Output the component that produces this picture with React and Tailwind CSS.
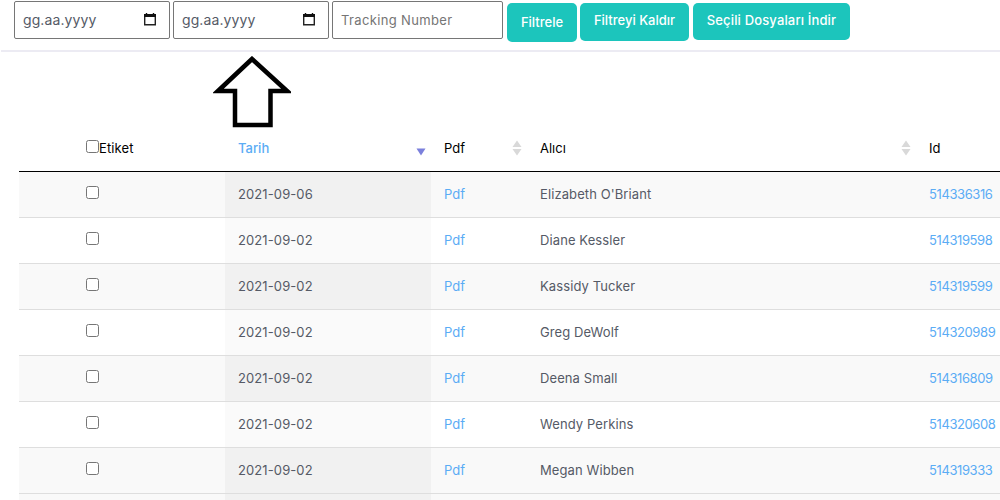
const rows = [
  ["2021-09-06", "Elizabeth O'Briant", "514336316"],
  ["2021-09-02", "Diane Kessler", "514319598"],
  ["2021-09-02", "Kassidy Tucker", "514319599"],
  ["2021-09-02", "Greg DeWolf", "514320989"],
  ["2021-09-02", "Deena Small", "514316809"],
  ["2021-09-02", "Wendy Perkins", "514320608"],
  ["2021-09-02", "Megan Wibben", "514319333"],
];

function Calendar() {
  return (
    <svg width="14" height="14" viewBox="0 0 14 14" className="mb-[3px] shrink-0">
      <path d="M1.7 2.7h10.6v10H1.7z" fill="none" stroke="#222" strokeWidth="1.4" />
      <path d="M1 2h12v3H1z" fill="#111" />
      <path d="M3.5 1v2M10.5 1v2" stroke="#111" strokeWidth="1.4" />
    </svg>
  );
}

function DateBox() {
  return (
    <div className="flex h-[38px] w-[156px] items-center justify-between rounded-[2px] border border-[#767676] bg-white pl-[8px] pr-[12px] text-[14px] text-[#555a66]">
      <span className="pb-[2px] tracking-[0.1px]">gg.aa.yyyy</span>
      <Calendar />
    </div>
  );
}

function Sort() {
  return (
    <svg width="10" height="16" viewBox="0 0 10 16" className="block">
      <path d="M5 0.5L9.5 7H0.5z" fill="#d9d9d9" />
      <path d="M5 15.5L9.5 9H0.5z" fill="#d9d9d9" />
    </svg>
  );
}

function Button({ children, className }) {
  return (
    <button className={`mt-[2px] rounded-[5px] bg-[#1cc5bc] text-[13px] font-medium text-white ${className}`}>
      {children}
    </button>
  );
}

export default function App() {
  return (
    <div className="h-[500px] w-[1000px] overflow-hidden bg-white font-['Inter',sans-serif]">
      <div className="ml-px flex h-[52px] border-b-2 border-[#ecebf3] pl-[13px] pt-px">
        <DateBox />
        <div className="ml-[3px]"><DateBox /></div>
        <div className="ml-[3px] flex h-[38px] w-[171px] items-center rounded-[2px] border border-[#767676] bg-white pl-[8px] pt-[2px] text-[13px] tracking-[0.35px] text-[#757575]">
          Tracking Number
        </div>
        <Button className="ml-[4px] h-[39px] w-[70px]">Filtrele</Button>
        <Button className="ml-[3px] h-[38px] w-[109px] pb-[2px]">Filtreyi Kaldır</Button>
        <Button className="ml-[4px] h-[37px] w-[157px] pb-[1px] tracking-[0.15px]">Seçili Dosyaları İndir</Button>
      </div>

      <div className="h-[74px] pl-[213px] pt-[4px]">
        <svg width="78" height="72" viewBox="0 0 78 72" className="block">
          <path d="M39 3L5 35H22V69H57.5V35H74z" fill="white" stroke="black" strokeWidth="4.5" strokeLinejoin="miter" />
        </svg>
      </div>

      <table className="ml-[19px] w-[1100px] table-fixed border-collapse text-[13px]">
        <colgroup>
          <col className="w-[206px]" />
          <col className="w-[206px]" />
          <col className="w-[96px]" />
          <col className="w-[389px]" />
          <col className="w-[203px]" />
        </colgroup>
        <thead>
          <tr className="h-[45px] border-b border-black text-left text-black">
            <th className="pl-[67px] font-normal">
              <div className="flex items-center">
                <input type="checkbox" className="m-0 h-[13px] w-[13px] -translate-y-[2px]" />
                <span className="tracking-[0.1px]">Etiket</span>
              </div>
            </th>
            <th className="pl-[13px] pr-[5px] font-medium text-[#5bacf5]">
              <div className="flex items-center justify-between">
                <span>Tarih</span>
                <svg width="10" height="8" viewBox="0 0 10 8" className="mt-[7px]">
                  <path d="M5 7.5L9.5 0.5H0.5z" fill="#7b80dc" />
                </svg>
              </div>
            </th>
            <th className="pl-[13px] pr-[5px] font-normal">
              <div className="flex items-center justify-between"><span>Pdf</span><Sort /></div>
            </th>
            <th className="pl-[13px] pr-[5px] font-normal">
              <div className="flex items-center justify-between"><span>Alıcı</span><Sort /></div>
            </th>
            <th className="pl-[13px] font-normal">Id</th>
          </tr>
        </thead>
        <tbody>
          {rows.map((row, i) => (
            <tr key={i} className={`h-[46px] border-b border-[#dedede] text-[#555a66] ${i % 2 === 0 ? "bg-[#f9f9f9]" : "bg-white"}`}>
              <td className="pl-[67px]">
                <input type="checkbox" className="m-0 block h-[13px] w-[13px] -translate-y-[2px]" />
              </td>
              <td className={`pl-[13px] pt-[1px] tracking-[0.1px] ${i % 2 === 0 ? "bg-[#f1f1f1]" : "bg-[#fafafa]"}`}>{row[0]}</td>
              <td className="pl-[13px] pt-[1px] text-[#5bacf5]">Pdf</td>
              <td className="pl-[13px] pt-[1px] tracking-[0.1px]">{row[1]}</td>
              <td className="pl-[13px] pt-[1px] tracking-[-0.4px] text-[#5bacf5]">{row[2]}</td>
            </tr>
          ))}
          <tr className="h-[46px] bg-[#f9f9f9]">
            <td></td>
            <td className="bg-[#f1f1f1]"></td>
            <td></td>
            <td></td>
            <td></td>
          </tr>
        </tbody>
      </table>
    </div>
  );
}
